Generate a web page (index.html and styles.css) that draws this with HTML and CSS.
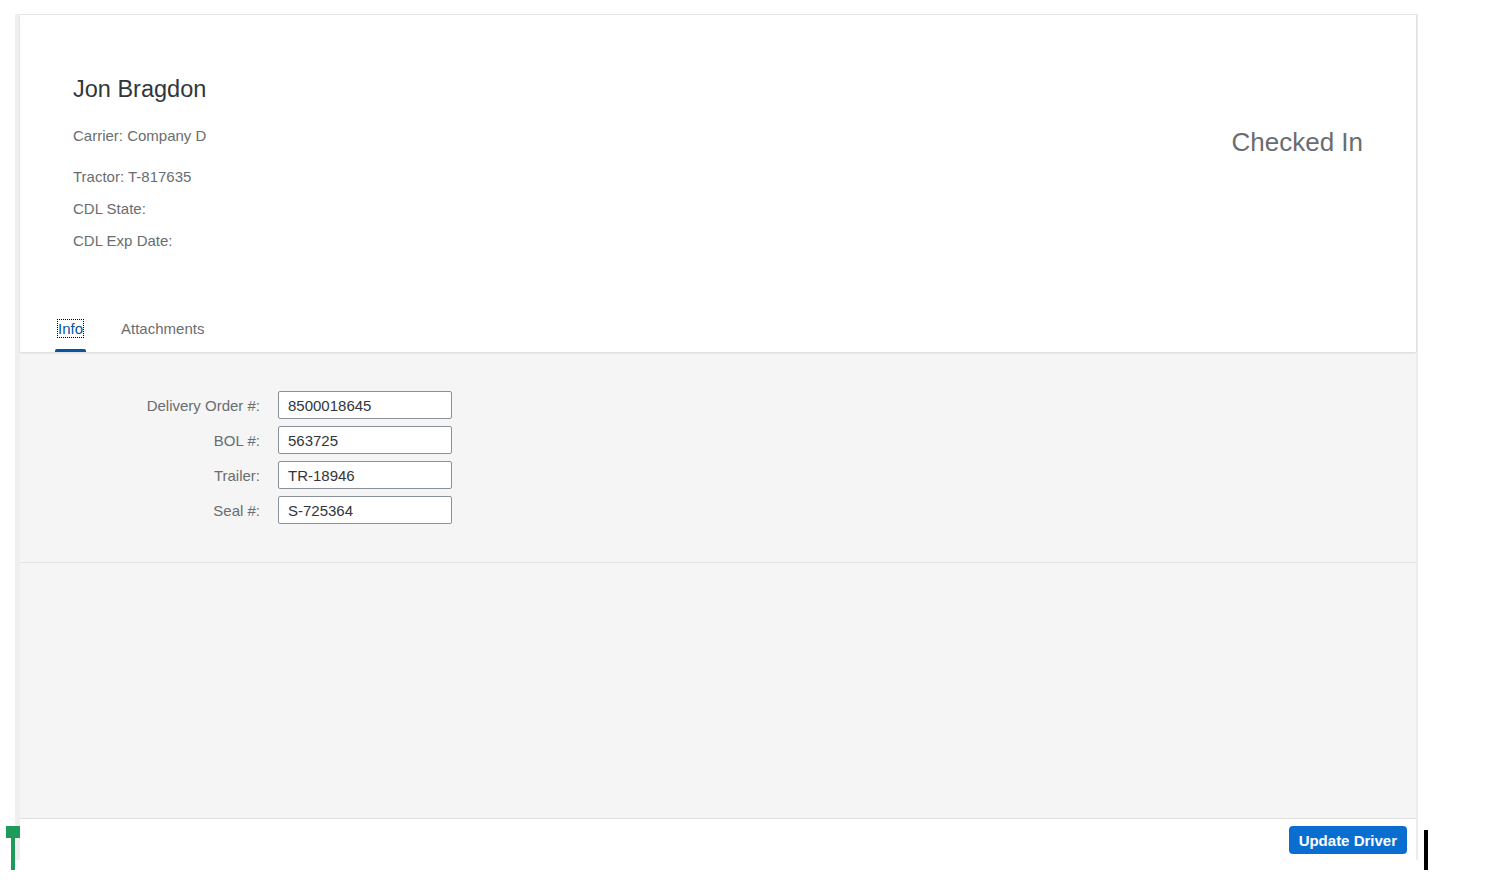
FILE: index.html
```html
<!DOCTYPE html>
<html>
<head>
<meta charset="utf-8">
<link rel="stylesheet" href="styles.css">
</head>
<body>
<div class="panel">
  <header class="header">
    <div class="header-main">
      <div class="info">
        <h1 class="name">Jon Bragdon</h1>
        <div class="carrier">Carrier: Company D</div>
        <div class="attr first">Tractor: T-817635</div>
        <div class="attr">CDL State:</div>
        <div class="attr">CDL Exp Date:</div>
      </div>
      <div class="status">Checked In</div>
    </div>
    <nav class="tabs">
      <div class="tab active"><span class="focus">Info</span></div>
      <div class="tab">Attachments</div>
    </nav>
  </header>
  <main class="content">
    <section class="form-section">
      <div class="form">
        <label class="lbl">Delivery Order #:</label>
        <div class="field">8500018645</div>
        <label class="lbl">BOL #:</label>
        <div class="field">563725</div>
        <label class="lbl">Trailer:</label>
        <div class="field">TR-18946</div>
        <label class="lbl">Seal #:</label>
        <div class="field">S-725364</div>
      </div>
    </section>
    <section class="empty"></section>
  </main>
  <footer class="footer">
    <button class="btn">Update Driver</button>
  </footer>
</div>
<div class="marker-green"><span class="head"></span><span class="stem"></span></div>
<div class="marker-black"></div>
</body>
</html>
```
FILE: styles.css
```css
html, body {
  margin: 0;
  padding: 0;
  background: #ffffff;
  font-family: "Liberation Sans", Arial, sans-serif;
}

.panel {
  margin: 14px 0 0 15px;
  width: 1403px;
  height: 846px;
  box-sizing: border-box;
  border-left: 5px solid #efefef;
  border-right: 2px solid #ececec;
  border-top: 1px solid #e6e6e6;
  display: flex;
  flex-direction: column;
}

.header {
  background: #ffffff;
  box-shadow: 0 1px 2px rgba(0,0,0,0.12);
  position: relative;
  z-index: 1;
}

.header-main {
  display: flex;
  justify-content: space-between;
  padding: 61px 53px 0 53px;
  height: 276px;
  box-sizing: border-box;
}

.name {
  margin: 0;
  font-size: 23.5px;
  font-weight: normal;
  line-height: 26px;
  color: #32363a;
}

.carrier {
  margin-top: 25px;
  font-size: 15px;
  line-height: 17px;
  color: #6a6d70;
}

.attr {
  margin-top: 15px;
  font-size: 15px;
  line-height: 17px;
  color: #6a6d70;
}

.attr.first {
  margin-top: 24px;
}

.status {
  margin-top: 51px;
  font-size: 26px;
  line-height: 30px;
  color: #6a6d70;
}

.tabs {
  display: flex;
  gap: 32px;
  padding-left: 35px;
  height: 61px;
  box-sizing: border-box;
}

.tab {
  display: flex;
  align-items: center;
  height: 100%;
  padding: 22px 3px 8px;
  box-sizing: border-box;
  font-size: 15px;
  color: #6a6d70;
  position: relative;
}

.tab.active {
  color: #0854a0;
}

.tab.active::after {
  content: "";
  position: absolute;
  left: 0;
  right: 0;
  bottom: 0;
  height: 3px;
  background: #0854a0;
  border-radius: 2px 2px 0 0;
}

.focus {
  outline: 1px dotted #000;
  outline-offset: 0px;
}

.content {
  flex: 1;
  background: #f5f5f5;
  display: flex;
  flex-direction: column;
}

.form-section {
  height: 211px;
  box-sizing: border-box;
  padding-top: 39px;
  border-bottom: 1px solid #e4e4e4;
}

.form {
  display: grid;
  grid-template-columns: 240px 174px;
  column-gap: 18px;
  row-gap: 7px;
}

.lbl {
  display: flex;
  align-items: center;
  justify-content: flex-end;
  font-size: 15px;
  color: #6a6d70;
}

.field {
  height: 28px;
  box-sizing: border-box;
  border: 1px solid #89919a;
  border-radius: 2px;
  background: #ffffff;
  padding: 0 9px;
  display: flex;
  align-items: center;
  font-size: 15px;
  color: #32363a;
}

.empty {
  flex: 1;
  border-bottom: 1px solid #e0e0e0;
}

.footer {
  height: 41px;
  background: #ffffff;
  display: flex;
  justify-content: flex-end;
  align-items: flex-start;
  padding: 7px 9px 0 0;
  box-sizing: border-box;
}

.btn {
  height: 28px;
  padding: 0 10px;
  border: none;
  border-radius: 4px;
  background: #0a6ed1;
  color: #ffffff;
  font-family: "Liberation Sans", Arial, sans-serif;
  font-weight: bold;
  font-size: 15px;
}

.marker-green {
  position: absolute;
  left: 6px;
  top: 826px;
  width: 14px;
  height: 44px;
}

.marker-green .head {
  position: absolute;
  left: 0;
  top: 0;
  width: 14px;
  height: 12px;
  background: #1e9b5a;
}

.marker-green .stem {
  position: absolute;
  left: 5px;
  top: 12px;
  width: 4px;
  height: 32px;
  background: #1e9b5a;
}

.marker-black {
  position: absolute;
  left: 1424px;
  top: 830px;
  width: 4px;
  height: 40px;
  background: #000000;
}
```
